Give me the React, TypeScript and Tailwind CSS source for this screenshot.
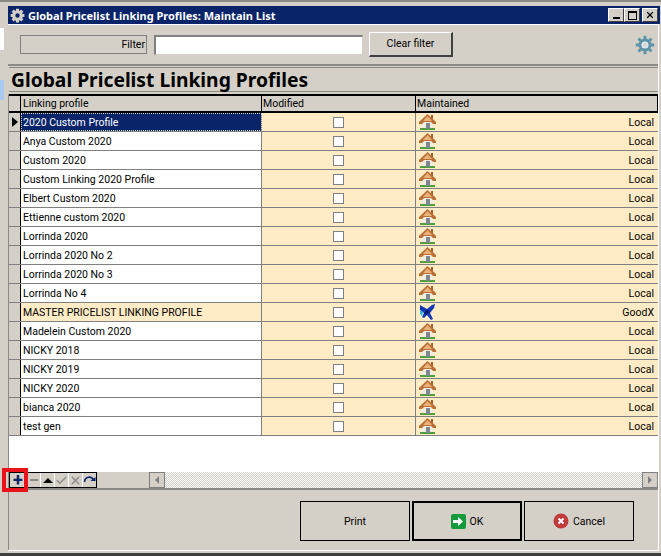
import { Check, X } from 'lucide-react';

const rows = [
  '2020 Custom Profile',
  'Anya Custom 2020',
  'Custom 2020',
  'Custom Linking 2020 Profile',
  'Elbert Custom 2020',
  'Ettienne custom 2020',
  'Lorrinda 2020',
  'Lorrinda 2020 No 2',
  'Lorrinda 2020 No 3',
  'Lorrinda No 4',
  'MASTER PRICELIST LINKING PROFILE',
  'Madelein Custom 2020',
  'NICKY 2018',
  'NICKY 2019',
  'NICKY 2020',
  'bianca 2020',
  'test gen',
];

function House() {
  return (
    <svg width="17" height="16" viewBox="0 0 17 16">
      <path d="M1 14h15v2H1z" fill="#4f9e3c" />
      <path d="M3 8h11v6H3z" fill="#f2ecdf" />
      <path d="M7 9h4v6H7z" fill="#7d8791" />
      <path d="M12 1h2v4h-2z" fill="#a85f2a" />
      <path d="M8.500 0 0 8v2h3l2-2h7l2 2h3V8z" fill="#b96f35" />
      <path d="M8.500 2 4 7h9z" fill="#e8b27a" />
    </svg>
  );
}

function Plane() {
  return (
    <svg width="17" height="16" viewBox="0 0 17 16">
      <path d="M1 1l7 4 5-4 3-1-1 4-4 5 3 6-2 1-4-5-3 3-2-1 2-4-4-3z" fill="#1338b8" />
      <path d="M1 6l3 2-1 4-2-2z" fill="#22c0d8" />
      <path d="M8 5l3 3-4 3-2-2z" fill="#0a1a70" />
    </svg>
  );
}

function Gear({ className, color, inner, width }: { className: string; color: string; inner?: string; width: number }) {
  return (
    <svg className={className} viewBox="0 0 24 24" fill="none" stroke={color} strokeWidth={width}>
      <circle cx="12" cy="12" r="6" />
      <path d="M12 1v4M12 19v4M1 12h4M19 12h4M4.200 4.200l2.900 2.900M16.900 16.900l2.900 2.900M4.200 19.800l2.900-2.900M16.900 7.100l2.900-2.900" />
      {inner && <circle cx="12" cy="12" r="3" stroke={inner} strokeWidth="2" />}
    </svg>
  );
}

function TitleButton({ children }: { children: React.ReactNode }) {
  return (
    <div className="w-[16px] h-[14px] bg-[#d4d0c8] border border-t-white border-l-white border-r-[#404040] border-b-[#404040] flex items-center justify-center">
      {children}
    </div>
  );
}

function NavButton({ children }: { children: React.ReactNode }) {
  return <div className="w-[13px] flex items-center justify-center bg-[#d4d0c8]">{children}</div>;
}

export default function App() {
  return (
    <div className="w-[661px] h-[556px] overflow-hidden bg-[#d4d0c8] flex flex-col font-['Roboto',sans-serif] text-[10.500px] text-black leading-none">
      <div className="h-[2px] shrink-0 bg-[#8c8a85]" />

      <div className="flex-1 min-h-0 flex">
        {/* bits of the window behind */}
        <div className="w-[4px] shrink-0 flex flex-col">
          <div className="h-[26px]" />
          <div className="h-[22px] bg-white" />
          <div className="h-[30px]" />
          <div className="h-[20px] bg-[#a6caf0]" />
        </div>

        <div className="w-[656px] flex flex-col pl-[4px] pt-[4px] pb-[2px]">
          <div className="h-[18px] shrink-0 bg-[#0a246a] flex items-center px-[2px]">
            <Gear className="w-[15px] h-[15px] mr-[3px]" color="#d4d0c8" width={5} />
            <span className="text-white font-bold text-[11px] font-['Noto_Sans',sans-serif]">Global Pricelist Linking Profiles: Maintain List</span>
            <div className="ml-auto flex items-center">
              <TitleButton><div className="w-[7px] h-[2px] bg-black mt-[6px]" /></TitleButton>
              <TitleButton><div className="w-[9px] h-[9px] border border-black border-t-2" /></TitleButton>
              <div className="ml-[2px]">
                <TitleButton><X className="w-[10px] h-[10px]" strokeWidth={3} /></TitleButton>
              </div>
            </div>
          </div>

          <div className="flex-1 min-h-0 flex flex-col mr-[1px] border-t border-t-white border-r border-r-white border-b border-b-white">
            <div className="h-[41px] shrink-0 flex items-center border-b-2 border-b-[#8c8a85] pl-[12px] pr-[3px]">
              <div className="w-[127px] h-[19px] border border-[#808080] flex items-center justify-end pr-[1px] pt-[1px]">Filter</div>
              <div className="w-[209px] h-[20px] ml-[7px] bg-white border border-t-2 border-l-2 border-t-[#808080] border-l-[#808080] border-r-[#d4d0c8] border-b-[#d4d0c8]" />
              <div className="w-[84px] h-[25px] ml-[6px] flex items-center justify-center border border-t-white border-l-white border-r-2 border-b-2 border-r-[#404040] border-b-[#404040]">Clear filter</div>
              <Gear className="w-[20px] h-[20px] ml-auto" color="#5d93a8" inner="#dce8ec" width={3.4} />
            </div>

            <div className="h-[25px] shrink-0 mt-[1px] flex items-center pl-[2px] ml-[1px] border-y border-y-[#8c8a85] font-bold text-[19.250px] font-['Noto_Sans',sans-serif]">
              Global Pricelist Linking Profiles
            </div>

            <div className="flex-1 min-h-0 flex flex-col mt-[2px] border-l border-l-[#8c8a85]">
              <div className="flex-1 min-h-0 bg-white">
                <div className="flex h-[19px] border-y-2 border-y-black bg-[#d4d0c8]">
                  <div className="w-[12px] border-r border-r-black" />
                  <div className="w-[241px] border-r border-r-black flex items-center pl-[2px] pt-[2px]">Linking profile</div>
                  <div className="w-[154px] border-r border-r-black flex items-center pl-[1px] pt-[2px]">Modified</div>
                  <div className="flex-1 flex items-center pl-[1px] pt-[2px] border-r border-r-black">Maintained</div>
                </div>
                {rows.map((name, i) => {
                  const master = name.startsWith('MASTER');
                  const selected = i === 0;
                  return (
                    <div key={name} className="flex h-[19px] border-b border-b-[#808080]">
                      <div className="w-[12px] bg-[#d4d0c8] border-r border-r-black flex items-center justify-center">
                        {selected && <div className="w-0 h-0 border-y-[5px] border-y-transparent border-l-[6px] border-l-black" />}
                      </div>
                      <div className={`w-[241px] flex items-center pl-[2px] pt-[2px] border-r border-r-[#808080] ${selected ? 'bg-[#0a246a] text-white outline outline-dotted outline-[#d4d0c8] -outline-offset-1' : master ? 'bg-[#ffecc6]' : 'bg-white'}`}>{name}</div>
                      <div className="w-[154px] flex items-center justify-center bg-[#ffecc6] border-r border-r-[#808080]">
                        <div className="w-[11px] h-[11px] bg-white border border-[#808080]" />
                      </div>
                      <div className="flex-1 flex items-center justify-between bg-[#ffecc6] pl-[3px] pr-[4px]">
                        {master ? <Plane /> : <House />}
                        <span className="pt-[2px]">{master ? 'GoodX' : 'Local'}</span>
                      </div>
                    </div>
                  );
                })}
              </div>

              <div className="h-[18px] shrink-0 flex bg-[#d4d0c8] border-b-2 border-b-[#8c8a85]">
                <div className="relative flex gap-[1px] bg-white border border-black">
                  <div className="w-[16px] flex items-center justify-center bg-[#d4d0c8]">
                    <span className="text-[#0a246a] font-bold text-[18px] leading-none">+</span>
                  </div>
                  <NavButton><div className="w-[8px] h-[2px] bg-[#8c8a85]" /></NavButton>
                  <NavButton><div className="w-0 h-0 border-x-[5px] border-x-transparent border-b-[5px] border-b-black" /></NavButton>
                  <NavButton><Check className="w-[13px] h-[13px] text-[#8c8a85]" strokeWidth={2.5} /></NavButton>
                  <NavButton><X className="w-[13px] h-[13px] text-[#8c8a85]" strokeWidth={2.5} /></NavButton>
                  <NavButton>
                    <svg width="13" height="11" viewBox="0 0 13 11" fill="none" stroke="#0a246a" strokeWidth="1.600">
                      <path d="M1.500 7C2 1.500 8 .5 10.500 5" />
                      <path d="M7.500 6h5V2z" fill="#0a246a" stroke="none" />
                    </svg>
                  </NavButton>
                  <div className="absolute left-[-8px] top-[-5px] w-[26px] h-[24px] border-[4px] border-[#e8131b] pointer-events-none" />
                </div>
                <div className="w-[16px] ml-[52px] flex items-center justify-center border border-[#808080]">
                  <div className="w-0 h-0 border-y-[4px] border-y-transparent border-r-[4px] border-r-[#808080]" />
                </div>
                <div className="flex-1 bg-[repeating-conic-gradient(#fff_0_25%,#d4d0c8_0_50%)] bg-[length:2px_2px]" />
                <div className="w-[16px] flex items-center justify-center border border-[#808080]">
                  <div className="w-0 h-0 border-y-[4px] border-y-transparent border-l-[4px] border-l-[#808080]" />
                </div>
              </div>

              <div className="h-[60px] shrink-0 flex items-start justify-end gap-[2px] pt-[11px] pr-[24px]">
                <div className="w-[110px] h-[40px] pt-[2px] border border-black flex items-center justify-center">Print</div>
                <div className="w-[110px] h-[40px] border-2 border-black flex items-center justify-center gap-[4px]">
                  <svg width="15" height="15" viewBox="0 0 15 15">
                    <rect width="15" height="15" rx="2" fill="#169b3c" />
                    <path d="M2 6h5V3l5 4.500-5 4.500V9H2z" fill="#fff" />
                  </svg>
                  <span className="pt-[2px]">OK</span>
                </div>
                <div className="w-[110px] h-[40px] border border-black flex items-center justify-center gap-[4px]">
                  <svg width="16" height="16" viewBox="0 0 16 16">
                    <circle cx="8" cy="8" r="7.500" fill="#c13a3a" />
                    <path d="M5.500 5.500l5 5M10.500 5.500l-5 5" stroke="#fff" strokeWidth="2" />
                  </svg>
                  <span className="pt-[2px]">Cancel</span>
                </div>
              </div>
            </div>
          </div>
        </div>
      </div>

      <div className="h-[3px] shrink-0 bg-[#404040]" />
    </div>
  );
}
